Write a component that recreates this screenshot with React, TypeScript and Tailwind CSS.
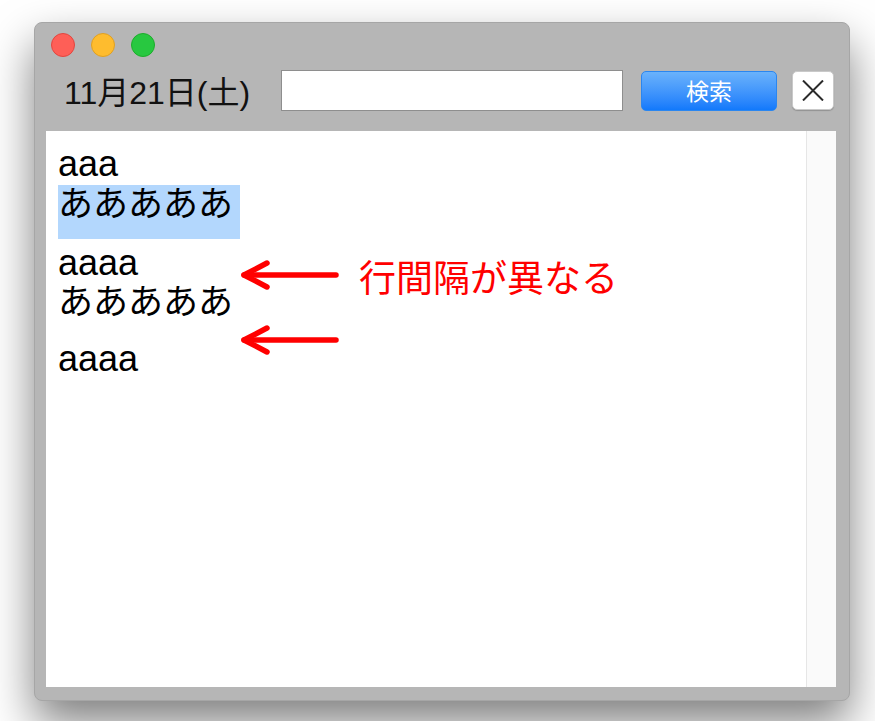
import React from "react";

const latin = "font-['Liberation_Sans','Noto_Sans_CJK_JP',sans-serif]";
const cjk = "font-['Noto_Sans_CJK_JP',sans-serif]";

function TrafficLights() {
    return (
        <div className="flex items-center gap-[16px] pl-[16px] h-[24px]">
            <span className="w-[24px] h-[24px] rounded-full bg-[#fe5f57] border border-[#e2463f]" />
            <span className="w-[24px] h-[24px] rounded-full bg-[#febc2e] border border-[#dfa023]" />
            <span className="w-[24px] h-[24px] rounded-full bg-[#28c840] border border-[#1dad2b]" />
        </div>
    );
}

function Arrow({ y }: { y: number }) {
    return (
        <g stroke="#ff0000" strokeWidth={5.5} strokeLinecap="round" strokeLinejoin="round" fill="none">
            <line x1={198} y1={y} x2={290} y2={y} />
            <polyline points={`221,${y - 12} 198,${y} 221,${y + 12}`} />
        </g>
    );
}

export default function App() {
    return (
        <div className="w-[875px] h-[721px] bg-white overflow-hidden pt-[22px] pl-[34px]">
            <div className="w-[816px] h-[679px] bg-[#b6b6b6] rounded-[8px] border border-[#a6a6a6] shadow-[0_22px_45px_rgba(0,0,0,0.5)] flex flex-col pt-[10px]">
                <TrafficLights />

                {/* Toolbar */}
                <div className="flex items-center h-[41px] mt-[13px] pl-[29px]">
                    <span className={`${latin} w-[217px] text-[32px] text-[#111] leading-none pt-[4px]`}>
                        11月21日(土)
                    </span>
                    <div className="w-[342px] h-[41px] bg-white border border-[#8e8e8e]" />
                    <button className={`${cjk} ml-[18px] w-[136px] h-[40px] rounded-[5px] bg-gradient-to-b from-[#6ab2fb] to-[#1179fb] border border-[#2a86f0] text-white text-[23px] leading-none`}>
                        検索
                    </button>
                    <button className="ml-[15px] w-[42px] h-[39px] rounded-[5px] bg-white border border-[#c9c9c9] shadow-[0_1px_1px_rgba(0,0,0,0.2)] flex items-center justify-center">
                        <svg width="22" height="21" viewBox="0 0 22 21">
                            <path d="M1 0.5 L21 20.5 M21 0.5 L1 20.5" stroke="#2b2b2b" strokeWidth="2" />
                        </svg>
                    </button>
                </div>

                {/* Text area */}
                <div className="relative flex mt-[20px] ml-[11px] w-[790px] h-[556px] bg-white">
                    <div className="flex-1 pt-[12px] pl-[12px] text-black">
                        <div className={`${latin} h-[42px] text-[36px] leading-[42px]`}>aaa</div>
                        <div className={`${latin} w-[182px] h-[54px] bg-[#b3d7fd] text-[35px] leading-[37px]`}>
                            あああああ
                        </div>
                        <div className={`${latin} h-[44px] text-[36px] leading-[47px]`}>aaaa</div>
                        <div className={`${latin} h-[55px] text-[35px] leading-[38px]`}>あああああ</div>
                        <div className={`${latin} h-[42px] text-[36px] leading-[42px]`}>aaaa</div>
                    </div>
                    <div className="w-[30px] bg-[#fafafa] border-l border-[#e6e6e6]" />

                    {/* annotations */}
                    <svg className="absolute left-0 top-0" width="320" height="240">
                        <Arrow y={144} />
                        <Arrow y={209} />
                    </svg>
                    <span className={`${cjk} absolute left-[313px] top-[127px] text-[37px] leading-[36px] text-[#ff0000] whitespace-nowrap`}>
                        行間隔が異なる
                    </span>
                </div>
            </div>
        </div>
    );
}
